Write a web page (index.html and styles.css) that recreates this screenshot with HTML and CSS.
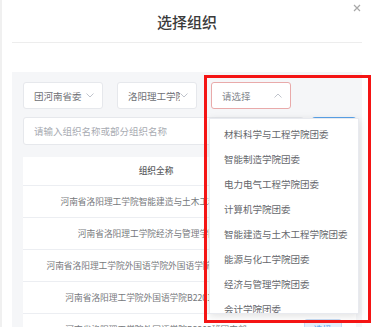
FILE: index.html
```html
<!DOCTYPE html>
<html lang="zh-CN">

<head>
    <meta charset="UTF-8">
    <meta name="viewport" content="width=device-width, initial-scale=1.0">
    <title>选择组织</title>
    <link rel="stylesheet" href="styles.css">
</head>

<body>
    <div class="dialog">
        <span class="dialog_close">
            <svg width="8" height="8" viewBox="0 0 8 8"><path d="M1 1L7 7M7 1L1 7" stroke="#a8a8a8" stroke-width="1.2" fill="none"/></svg>
        </span>

        <div class="dialog_header">
            <h2 class="dialog_title">选择组织</h2>
        </div>

        <div class="dialog_body">
            <div class="filters">
                <div class="select">
                    <span class="select_text">团河南省委</span>
                    <svg class="chevron" width="8" height="5" viewBox="0 0 8 5"><polyline points="0.5,0.5 4,4 7.5,0.5" stroke="#c0c4cc" fill="none"/></svg>
                </div>
                <div class="select">
                    <span class="select_text select_text--clip">洛阳理工学院</span>
                    <svg class="chevron" width="8" height="5" viewBox="0 0 8 5"><polyline points="0.5,0.5 4,4 7.5,0.5" stroke="#c0c4cc" fill="none"/></svg>
                </div>
                <div class="select select--open">
                    <span class="select_text select_text--placeholder">请选择</span>
                    <svg class="chevron" width="8" height="5" viewBox="0 0 8 5"><polyline points="0.5,4.5 4,1 7.5,4.5" stroke="#c0c4cc" fill="none"/></svg>

                    <ul class="dropdown">
                        <li>材料科学与工程学院团委</li>
                        <li>智能制造学院团委</li>
                        <li>电力电气工程学院团委</li>
                        <li>计算机学院团委</li>
                        <li>智能建造与土木工程学院团委</li>
                        <li>能源与化工学院团委</li>
                        <li>经济与管理学院团委</li>
                        <li>会计学院团委</li>
                    </ul>
                </div>
            </div>

            <div class="search_row">
                <input class="search_input" type="text" placeholder="请输入组织名称或部分组织名称">
                <button class="search_btn">查询</button>
            </div>

            <table class="org_table">
                <colgroup>
                    <col class="col_name">
                    <col class="col_op">
                </colgroup>
                <thead>
                    <tr><th>组织全称</th><th>操作</th></tr>
                </thead>
                <tbody>
                    <tr><td>河南省洛阳理工学院智能建造与土木工程学院团委</td><td><button class="pick_btn">选择</button></td></tr>
                    <tr><td>河南省洛阳理工学院经济与管理学院团委</td><td><button class="pick_btn">选择</button></td></tr>
                    <tr><td>河南省洛阳理工学院外国语学院外国语学院2022级团支部</td><td><button class="pick_btn">选择</button></td></tr>
                    <tr><td>河南省洛阳理工学院外国语学院B2201班团支部</td><td><button class="pick_btn">选择</button></td></tr>
                    <tr><td>河南省洛阳理工学院外国语学院B2202班团支部</td><td><button class="pick_btn">选择</button></td></tr>
                </tbody>
            </table>
        </div>

        <div class="mark_box"></div>
    </div>
</body>

</html>
```

FILE: styles.css
```css
* {
    box-sizing: border-box;
}

body,
html {
    margin: 0;
    padding: 0;
    width: 100%;
    height: 100%;
    overflow: hidden;
    background-color: #ffffff;
    font-family: "Noto Sans CJK SC", "Noto Sans", sans-serif;
}

.dialog {
    position: relative;
    width: 373px;
    height: 327px;
    overflow: hidden;
    border-left: 2px solid #f0f0f0;
}

.dialog_close {
    position: absolute;
    top: 4px;
    right: 12px;
    line-height: 0;
}

.dialog_header {
    height: 43px;
    margin: 0 11px 0 10px;
    border-bottom: 1px solid #ededed;
    display: flex;
    align-items: center;
    justify-content: center;
}

.dialog_title {
    margin: 0;
    font-size: 15px;
    font-weight: 500;
    color: #3a3a3a;
    line-height: 1;
}

.dialog_body {
    margin: 29px 11px 0 10px;
    padding: 10px 6px 0 11px;
    height: 300px;
    background-color: #f5f6f8;
}

.filters {
    display: flex;
    gap: 14px;
}

.select {
    position: relative;
    width: 80px;
    height: 27px;
    padding: 0 8px 0 10px;
    display: flex;
    align-items: center;
    justify-content: space-between;
    background-color: #ffffff;
    border: 1px solid #e6e8ec;
    border-radius: 3px;
    font-size: 9.5px;
    color: #6e7075;
}

.select_text {
    white-space: nowrap;
}

.select_text--clip {
    width: 54px;
    overflow: hidden;
}

.select_text--placeholder {
    color: #85888e;
}

.select--open {
    border-color: #e9aaaa;
}

.chevron {
    flex-shrink: 0;
}

.dropdown {
    position: absolute;
    top: 35px;
    left: -3px;
    width: 150px;
    height: 196px;
    margin: 0;
    padding: 3px 0 0;
    list-style: none;
    background-color: #ffffff;
    border: 1px solid #e8eaef;
    box-shadow: 0 2px 8px rgba(0, 0, 0, 0.12);
    z-index: 5;
    overflow: hidden;
}

.dropdown li {
    height: 25px;
    line-height: 25px;
    padding: 0 14px;
    font-size: 9.5px;
    color: #66686d;
    white-space: nowrap;
}

.search_row {
    display: flex;
    margin-top: 8px;
    gap: 8px;
}

.search_input {
    flex: 1;
    height: 28px;
    padding: 0 10px;
    border: 1px solid #e6e8ec;
    border-radius: 3px;
    font-family: inherit;
    font-size: 9.5px;
    outline: none;
}

.search_input::placeholder {
    color: #a8abb2;
}

.search_btn {
    width: 44px;
    height: 28px;
    border: none;
    border-radius: 3px;
    background-color: #5aa3ea;
    color: #ffffff;
    font-family: inherit;
    font-size: 9.5px;
}

.org_table {
    width: 100%;
    margin-top: 12px;
    table-layout: fixed;
    border-collapse: collapse;
    background-color: #ffffff;
    font-size: 8.7px;
    color: #76787c;
}

.col_name {
    width: 266px;
}

.org_table th {
    height: 28px;
    padding: 0;
    font-weight: 500;
    color: #5c5e62;
    border-bottom: 1px solid #eceef2;
}

.org_table td {
    height: 32px;
    padding: 0;
    text-align: center;
    white-space: nowrap;
    border-bottom: 1px solid #eceef2;
}

.pick_btn {
    width: 38px;
    height: 20px;
    border: 1px solid #c6dcf4;
    border-radius: 3px;
    background-color: #e3eefa;
    color: #5aa3ea;
    font-family: inherit;
    font-size: 8.7px;
}

.mark_box {
    position: absolute;
    left: 202px;
    top: 75px;
    width: 167px;
    height: 248px;
    border: 3px solid #f41414;
    z-index: 10;
}
```
